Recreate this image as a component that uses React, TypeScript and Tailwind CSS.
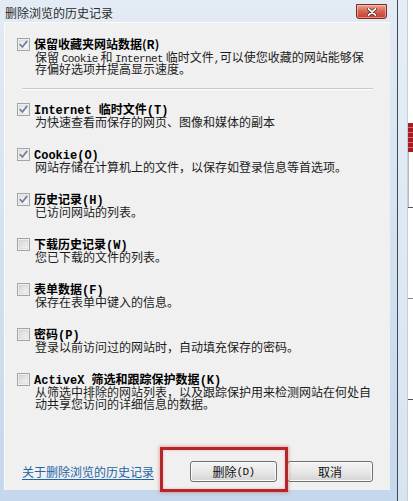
import React from "react";

const CJK = "font-['Noto_Sans_CJK_SC',sans-serif]";

function Lat({ children, bold }: { children: React.ReactNode; bold?: boolean }) {
  return bold ? (
    <span className="font-['Liberation_Mono',monospace] text-[12px] leading-[10px] font-bold">{children}</span>
  ) : (
    <span className="font-['Liberation_Mono',monospace] text-[11px] leading-[10px] tracking-[-0.6px]">{children}</span>
  );
}

function CheckBox({ checked }: { checked: boolean }) {
  const id = checked ? "cbOn" : "cbOff";
  return (
    <svg width="13" height="13" viewBox="0 0 13 13" className="mt-[1px] shrink-0">
      <defs>
        <linearGradient id={id} x1="0" y1="0" x2="1" y2="1">
          <stop offset="0" stopColor={checked ? "#e2e2e2" : "#d4d4d4"} />
          <stop offset="1" stopColor={checked ? "#ffffff" : "#f6f6f6"} />
        </linearGradient>
      </defs>
      <rect x="0.5" y="0.5" width="12" height="12" fill="#fdfdfd" stroke="#a4a4a4" />
      <rect x="2" y="2" width="9" height="9" fill={`url(#${id})`} stroke="#c9c9c9" strokeWidth="0.6" />
      {checked && (
        <path d="M3.2 6.6 L5.4 9 L9.8 3.4" fill="none" stroke="#6f7f97" strokeWidth="1.7" strokeLinecap="round" strokeLinejoin="round" />
      )}
    </svg>
  );
}

function Item({
  checked,
  label,
  lines,
}: {
  checked: boolean;
  label: React.ReactNode;
  lines: React.ReactNode[];
}) {
  return (
    <div className="flex gap-[4px]">
      <CheckBox checked={checked} />
      <div className="flex flex-col">
        <div className={`${CJK} h-[14px] text-[12px] font-bold leading-[14px] text-black whitespace-nowrap`}>{label}</div>
        {lines.map((line, i) => (
          <div key={i} className={`${CJK} h-[12px] text-[12px] leading-[12px] text-[#1c1c1c] ml-[1px] whitespace-nowrap`}>
            {line}
          </div>
        ))}
      </div>
    </div>
  );
}

function Button({ children, w }: { children: React.ReactNode; w: string }) {
  return (
    <div
      className={`${w} h-[21px] rounded-[3px] border border-[#707070] bg-gradient-to-b from-[#f3f3f3] via-[#e8e8e8] to-[#d4d4d4] shadow-[inset_0_0_0_1px_#fbfbfb] flex items-center justify-center ${CJK} text-[12px] leading-[14px] text-[#111]`}
    >
      {children}
    </div>
  );
}

export default function App() {
  return (
    <div className="flex w-[413px] h-[501px] overflow-hidden bg-white">
      {/* dialog window */}
      <div className="w-[398px] h-full flex flex-col border-r border-[#3c4a5c] bg-gradient-to-b from-[#e3ebf4] via-[#d3e1ef] to-[#c4d7ec]">
        {/* title bar */}
        <div className="h-[22px] flex items-start justify-between shrink-0">
          <div className={`${CJK} text-[12px] leading-[14px] text-[#2a2a2a] ml-[5px] mt-[6px]`}>删除浏览的历史记录</div>
          <div className="mr-[10px] mt-[4px] w-[31px] h-[15px] rounded-b-[3px] border border-[#7a2a22] bg-gradient-to-b from-[#eaa697] via-[#d6604f] to-[#c2402f] flex items-center justify-center shadow-[inset_0_0_0_1px_rgba(255,220,210,0.5)]">
            <svg width="10" height="8" viewBox="0 0 10 8">
              <path d="M1.5 0.8 L8.5 7.2 M8.5 0.8 L1.5 7.2" stroke="#4a1a14" strokeWidth="3" strokeLinecap="round" />
              <path d="M1.5 0.8 L8.5 7.2 M8.5 0.8 L1.5 7.2" stroke="#ffffff" strokeWidth="1.8" strokeLinecap="round" />
            </svg>
          </div>
        </div>

        {/* client area */}
        <div className="relative ml-[4px] mr-[7px] h-[468px] bg-[#f0f0f0] border-l border-t border-[#f8fafc] flex flex-col pl-[12px] pt-[14px] pb-[8px]">
          <Item
            checked
            label="保留收藏夹网站数据(R)"
            lines={[
              <>
                保留 <Lat>Cookie</Lat> 和 <Lat>Internet</Lat> 临时文件<Lat>,</Lat>可以使您收藏的网站能够保
              </>,
              "存偏好选项并提高显示速度。",
            ]}
          />

          <div className="mt-[13px] mb-[12px] ml-[5px] w-[351px] h-[2px] border-t border-[#c9c9c9] border-b border-b-white" />

          <div className="flex flex-col gap-[19px]">
            <Item
              checked
              label={
                <>
                  <Lat bold>Internet </Lat>临时文件<Lat bold>(T)</Lat>
                </>
              }
              lines={["为快速查看而保存的网页、图像和媒体的副本"]}
            />
            <Item checked label={<Lat bold>Cookie(O)</Lat>} lines={["网站存储在计算机上的文件，以保存如登录信息等首选项。"]} />
            <Item
              checked
              label={
                <>
                  历史记录<Lat bold>(H)</Lat>
                </>
              }
              lines={["已访问网站的列表。"]}
            />
            <Item
              checked={false}
              label={
                <>
                  下载历史记录<Lat bold>(W)</Lat>
                </>
              }
              lines={["您已下载的文件的列表。"]}
            />
            <Item
              checked={false}
              label={
                <>
                  表单数据<Lat bold>(F)</Lat>
                </>
              }
              lines={["保存在表单中键入的信息。"]}
            />
            <Item
              checked={false}
              label={
                <>
                  密码<Lat bold>(P)</Lat>
                </>
              }
              lines={["登录以前访问过的网站时，自动填充保存的密码。"]}
            />
            <Item
              checked={false}
              label={
                <>
                  <Lat bold>ActiveX </Lat>筛选和跟踪保护数据<Lat bold>(K)</Lat>
                </>
              }
              lines={["从筛选中排除的网站列表，以及跟踪保护用来检测网站在何处自", "动共享您访问的详细信息的数据。"]}
            />
          </div>

          {/* footer: help link and buttons */}
          <div className="mt-auto flex items-center justify-between pl-[5px] pr-[17px]">
            <span className={`${CJK} text-[12px] leading-[14px] text-[#1f64a6] underline underline-offset-[2px]`}>
              关于删除浏览的历史记录
            </span>
            <div className="flex gap-[10px]">
              <Button w="w-[87px]">
                删除<Lat>(D)</Lat>
              </Button>
              <Button w="w-[86px]">取消</Button>
            </div>
          </div>

          {/* red highlight frame around the delete button */}
          <div className="absolute left-[155px] top-[424px] w-[128px] h-[45px] border-[3px] border-[#b2262c] shadow-[0_0_3px_1px_rgba(220,80,80,0.45),inset_0_0_3px_rgba(220,80,80,0.35)]" />
        </div>
      </div>

      {/* part of the window behind the dialog */}
      <div className="w-[15px] h-full flex">
        <div className="w-[10px] h-full bg-gradient-to-b from-[#e6edf5] to-[#d8e4f0] border-r border-[#c3cfdc]" />
        <div className="w-[5px] h-full bg-white flex flex-col">
          <div className="h-[123px]" />
          <div className="h-[29px] bg-[repeating-linear-gradient(to_bottom,#a51d24_0px,#a51d24_4px,#d4676b_4px,#d4676b_5px)]" />
          <div className="h-[55px] border-l border-[#b8b8b8]" />
          <div className="h-[1px] bg-[#555]" />
          <div className="h-[90px]" />
          <div className="h-[1px] bg-[#888]" />
          <div className="h-[100px]" />
          <div className="h-[1px] bg-[#555]" />
        </div>
      </div>
    </div>
  );
}
